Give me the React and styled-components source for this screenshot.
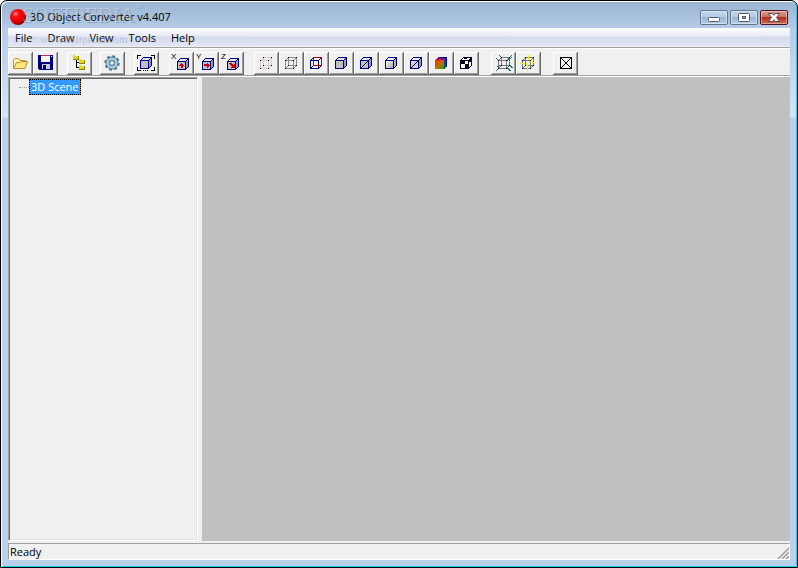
import { useState } from "react";
import styled, { createGlobalStyle } from "styled-components";

const navy = "#000080";
const cubeEdges =
  "M3.5 6.5h8v8h-8zM3.5 6.5l3-3h8v8l-3 3M11.5 6.5l3-3";
const wireEdges =
  "M3.5 6.5h8v8h-8zM6.5 3.5h8v8h-8zM3.5 6.5l3-3M11.5 6.5l3-3M11.5 14.5l3-3M3.5 14.5l3-3";
const cubeDots = [
  [3, 6],
  [11, 6],
  [3, 14],
  [11, 14],
  [6, 3],
  [14, 3],
  [6, 11],
  [14, 11],
];

const Icon = ({ children, smooth }) => (
  <svg
    width="20"
    height="18"
    viewBox="0 0 20 18"
    fill="none"
    shapeRendering={smooth ? "auto" : "crispEdges"}
    aria-hidden="true"
  >
    {children}
  </svg>
);

const Cube = ({ front = "#c0c0c0", top = "#e4e4e4", side = "#9898b8", line = navy }) => (
  <>
    <path d="M3.5 6.5l3-3h8l-3 3z" fill={top} />
    <path d="M11.5 6.5l3-3v8l-3 3z" fill={side} />
    <path d="M3.5 6.5h8v8h-8z" fill={front} />
    <path d={cubeEdges} stroke={line} />
  </>
);

const Dots = () =>
  cubeDots.map(([x, y]) => (
    <rect key={`${x}-${y}`} x={x} y={y} width="1" height="1" fill="#000" />
  ));

const OpenIcon = () => (
  <Icon smooth>
    <path
      d="M2.5 13.5v-8l1-1h4l1 2h6l1 1v2"
      fill="#fff3b0"
      stroke="#c09a28"
    />
    <path
      d="M2.5 14.5l3-6h4l1-1h6l-2.5 7z"
      fill="#ffe680"
      stroke="#b88f20"
      strokeLinejoin="round"
    />
  </Icon>
);

const SaveIcon = () => (
  <Icon>
    <path d="M2 1h15v15H3l-1-1z" fill={navy} />
    <path d="M5 1h9v7H5z" fill="#f4f4fa" />
    <path d="M5 1h9v1H5z" fill="#c03040" />
    <path d="M6 10h8v5H6z" fill="#c9cbd9" />
    <path d="M7 11h3v4H7z" fill="#000040" />
    <path d="M15 2h1v1h-1z" fill="#fff" />
  </Icon>
);

const TreeIcon = () => (
  <Icon>
    <path d="M6.5 6v8M6 8.5h3M6 13.5h3" stroke="#000" />
    <path d="M3 1h2v1h4v4H3zM9 5h2v1h4v4H9zM9 11h2v1h4v4H9z" fill="#8a8400" />
    <path d="M3 1h2v1h3v3H3zM9 5h2v1h3v3H9zM9 11h2v1h3v3H9z" fill="#e0d820" />
  </Icon>
);

const GearIcon = () => (
  <Icon smooth>
    <circle cx="9" cy="9" r="6.6" stroke="#4b7186" strokeWidth="2.2" strokeDasharray="2.7 2.48" />
    <circle cx="9" cy="9" r="4.4" stroke="#527d94" strokeWidth="4" />
    <circle cx="9" cy="9" r="4.4" stroke="#a9cfe1" strokeWidth="2.4" />
    <circle cx="9" cy="9" r="2.2" fill="#f0f0f0" stroke="#688b9c" />
  </Icon>
);

const FitIcon = () => (
  <Icon>
    <path
      d="M0.5 5V1.5H4M14 1.5h3.5V5M17.5 13v3.5H14M4 16.5H0.5V13M6 16.5h1M8 16.5h1M10 16.5h1"
      stroke="#000"
    />
    <Cube />
  </Icon>
);

const arrows = {
  X: "M5 10h1V9h1V8h1v1h1v1h1v1H8.500v2h-2v-2H5z",
  Y: "M5 9h3V8h1v1h1v1h1v1h-1v1H9v1H8v-2H5z",
  Z: "M5 8h3v1h1v1h1V9h1v4H7v-1h1v-1H7v-1H6V9H5z",
};

const AxisIcon = ({ axis }) => (
  <>
    <AxisLabel>{axis}</AxisLabel>
    <Icon>
      <g transform="translate(2 1)">
        <Cube />
        <path d={arrows[axis]} fill="#d00000" />
      </g>
    </Icon>
  </>
);

const PointsIcon = () => (
  <Icon>
    <path d={wireEdges} stroke="#d6cec6" />
    <Dots />
  </Icon>
);

const WireIcon = () => (
  <Icon>
    <path d={wireEdges} stroke="#8c8c8c" />
    <Dots />
  </Icon>
);

const HiddenIcon = () => (
  <Icon>
    <path d={wireEdges} stroke={navy} />
    <path d="M3.5 6.5h8v8h-8z" stroke={navy} />
    <path d="M6.5 3.5h8v8h-8z" stroke="#c00000" />
  </Icon>
);

const SolidIcon = () => (
  <Icon>
    <Cube />
  </Icon>
);

const SolidEdgeIcon = () => (
  <Icon>
    <Cube />
    <path d="M3.5 14.5l8-8" stroke="#000" />
  </Icon>
);

const SmoothIcon = () => (
  <Icon>
    <defs>
      <linearGradient id="smooth" x1="0" y1="0" x2="1" y2="1">
        <stop offset="0" stopColor="#fff" />
        <stop offset="1" stopColor="#a0a0a0" />
      </linearGradient>
    </defs>
    <Cube front="url(#smooth)" top="#f4f4e8" side="#b0b0b8" />
  </Icon>
);

const SmoothEdgeIcon = () => (
  <Icon>
    <Cube front="#d4d4d4" top="#f0f0f0" />
    <path d="M3.5 14.5l8-8" stroke="#000" />
  </Icon>
);

const ColorIcon = () => (
  <Icon>
    <defs>
      <linearGradient id="face" x1="0" y1="0" x2="1" y2="1">
        <stop offset="0" stopColor="#ff2000" />
        <stop offset="0.5" stopColor="#c07000" />
        <stop offset="1" stopColor="#20a000" />
      </linearGradient>
      <linearGradient id="lid">
        <stop offset="0" stopColor="#e00040" />
        <stop offset="1" stopColor="#4020c0" />
      </linearGradient>
      <linearGradient id="flank" x1="0" y1="0" x2="0" y2="1">
        <stop offset="0" stopColor="#2020d0" />
        <stop offset="1" stopColor="#007050" />
      </linearGradient>
    </defs>
    <path d="M3 6l3-3h9l-3 3z" fill="url(#lid)" />
    <path d="M12 6l3-3v9l-3 3z" fill="url(#flank)" />
    <path d="M3 6h9v9H3z" fill="url(#face)" />
    <path d="M6.5 3.5h8v8" stroke={navy} />
  </Icon>
);

const TextureIcon = () => (
  <Icon>
    <Cube front="#fff" top="#fff" side="#fff" />
    <path
      d="M3 6h5v4H3zM8 10h4v5H8zM7 3h3v2H7zM12 5h2v3h-2z"
      fill="#000"
    />
    <path d={cubeEdges} stroke="#000030" />
  </Icon>
);

const ExplodeIcon = () => (
  <Icon>
    <g transform="translate(1 0)">
      <path d={wireEdges} stroke="#777" />
      <path
        d="M1 4l3 3M4 1l3 3M14 4l3-3M12 7l5-4M1 17l3-3M12 14l4 3M14 11l4 3M2 13l4-2"
        stroke="#187878"
      />
      <Dots />
    </g>
  </Icon>
);

const NormalsIcon = () => (
  <Icon>
    <path d={wireEdges} stroke="#777" />
    <Dots />
    <path
      d="M9.5 1v5M8.5 12v5M1 9.5h4M13 8.500h4M7 11.500h2M10 7.500h2M7.500 9v2"
      stroke="#f4ee00"
    />
  </Icon>
);

const BoxIcon = () => (
  <Icon>
    <path d="M4.5 3.5h11v11h-11z" stroke="#000" />
    <path d="M4.5 3.5l11 11M15.5 3.5l-11 11" stroke="#000" />
  </Icon>
);

const toolGroups = [
  {
    gap: 9,
    tools: [
      { label: "Open", icon: <OpenIcon /> },
      { label: "Save", icon: <SaveIcon /> },
    ],
  },
  { gap: 8, tools: [{ label: "Scene tree", icon: <TreeIcon /> }] },
  { gap: 9, tools: [{ label: "Settings", icon: <GearIcon /> }] },
  { gap: 10, tools: [{ label: "Fit", icon: <FitIcon /> }] },
  {
    gap: 10,
    tools: [
      { label: "Rotate X", icon: <AxisIcon axis="X" /> },
      { label: "Rotate Y", icon: <AxisIcon axis="Y" /> },
      { label: "Rotate Z", icon: <AxisIcon axis="Z" /> },
    ],
  },
  {
    gap: 12,
    tools: [
      { label: "Points", icon: <PointsIcon /> },
      { label: "Wireframe", icon: <WireIcon /> },
      { label: "Hidden lines", icon: <HiddenIcon /> },
      { label: "Solid", icon: <SolidIcon /> },
      { label: "Solid with edges", icon: <SolidEdgeIcon /> },
      { label: "Smooth", icon: <SmoothIcon /> },
      { label: "Smooth with edges", icon: <SmoothEdgeIcon /> },
      { label: "Vertex colors", icon: <ColorIcon /> },
      { label: "Texture", icon: <TextureIcon /> },
    ],
  },
  {
    gap: 12,
    tools: [
      { label: "Vertex normals", icon: <ExplodeIcon /> },
      { label: "Face normals", icon: <NormalsIcon /> },
    ],
  },
  { gap: 0, tools: [{ label: "Bounding box", icon: <BoxIcon /> }] },
];

const menus = ["File", "Draw", "View", "Tools", "Help"];

const App = () => {
  const [selected, setSelected] = useState(true);

  return (
    <>
      <GlobalStyle />
      <Window>
        <TitleBar>
          <svg width="18" height="18" viewBox="0 0 18 18" aria-hidden="true">
            <defs>
              <radialGradient id="ball" cx="0.35" cy="0.3" r="0.75">
                <stop offset="0" stopColor="#ff9a9a" />
                <stop offset="0.25" stopColor="#ff1010" />
                <stop offset="0.7" stopColor="#e00000" />
                <stop offset="1" stopColor="#700000" />
              </radialGradient>
            </defs>
            <circle cx="9" cy="9" r="8" fill="url(#ball)" />
          </svg>
          <Title>3D Object Converter v4.407</Title>
          <Caption>
            <CaptionButton aria-label="Minimize">
              <svg width="12" height="11" viewBox="0 0 12 11">
                <rect x="0.5" y="5.5" width="11" height="4" rx="1" fill="#fff" stroke="#555b6b" />
              </svg>
            </CaptionButton>
            <CaptionButton aria-label="Maximize">
              <svg width="12" height="11" viewBox="0 0 12 11">
                <rect x="0.5" y="1.5" width="11" height="8" rx="1" fill="#fff" stroke="#555b6b" />
                <rect x="4.5" y="4.5" width="3" height="2" fill="#8fb0d4" stroke="#555b6b" />
              </svg>
            </CaptionButton>
            <CaptionButton $close aria-label="Close">
              <svg width="12" height="11" viewBox="0 0 12 11">
                <path
                  d="M0.500 1.5h4L6 3.3l1.500-1.800h4L8.500 5.500l3 4h-4L6 7.700 4.500 9.500h-4l3-4z"
                  fill="#fff"
                  stroke="#5b4a55"
                />
              </svg>
            </CaptionButton>
          </Caption>
        </TitleBar>
        <Menu>
          {menus.map((name) => (
            <MenuItem key={name}>{name}</MenuItem>
          ))}
        </Menu>
        <Toolbar>
          {toolGroups.map((group, i) => (
            <ToolGroup key={i} $gap={group.gap}>
              {group.tools.map((tool) => (
                <ToolButton key={tool.label} aria-label={tool.label}>
                  {tool.icon}
                </ToolButton>
              ))}
            </ToolGroup>
          ))}
        </Toolbar>
        <Content>
          <TreePane>
            <Branch />
            <TreeItem $selected={selected} onClick={() => setSelected(true)}>
              3D Scene
            </TreeItem>
          </TreePane>
          <Viewport />
        </Content>
        <StatusBar>
          <span>Ready</span>
          <svg width="12" height="12" viewBox="0 0 12 12" aria-hidden="true">
            <path d="M1 12L12 1M5 12l7-7M9 12l3-3" stroke="#969696" strokeWidth="1.4" />
          </svg>
        </StatusBar>
        <Watermark>
          <Brand>
            SOFTPEDIA<Mark>™</Mark>
          </Brand>
          <Site>www.softpedia.com</Site>
        </Watermark>
      </Window>
    </>
  );
};

const GlobalStyle = createGlobalStyle`
  * {
    box-sizing: border-box;
  }
  body {
    margin: 0;
    color: #000;
    background: #fff;
    font: 11px/16px "Open Sans", "Noto Sans", sans-serif;
  }
  button {
    margin: 0;
    padding: 0;
    border: 0;
    font: inherit;
  }
`;

const Window = styled.div`
  position: relative;
  display: flex;
  flex-direction: column;
  min-height: 100vh;
  padding: 1px 7px 7px;
  border: 1px solid #000;
  border-radius: 7px 7px 0 0;
  background: linear-gradient(#98b3d1, #b4cce8 28px, #d4e4f5 116px, #b9d1ea 117px);
  box-shadow: inset 1px 1px 0 #fff, inset -1px -1px 0 #1ccdec;
`;

const TitleBar = styled.header`
  display: flex;
  align-items: center;
  height: 26px;
  padding: 4px 2px 0 1px;
`;

const Title = styled.h1`
  flex: 1;
  margin: 0 0 0 3px;
  font-size: 11px;
  font-weight: 400;
`;

const Caption = styled.div`
  display: flex;
  gap: 2px;
`;

const CaptionButton = styled.button`
  display: flex;
  align-items: center;
  justify-content: center;
  width: 28px;
  height: 15px;
  border: 1px solid ${(props) => (props.$close ? "#4d1521" : "#5f7590")};
  border-radius: 2px;
  background: ${(props) =>
    props.$close
      ? "linear-gradient(#dc9a8c, #cf6c5a 48%, #b52f1c 50%, #cf6a50)"
      : "linear-gradient(#c3d6ea, #b4cbe4 48%, #98b5d3 50%, #b5cde7)"};
  box-shadow: inset 0 0 0 1px rgba(255, 255, 255, 0.4);
`;

const Menu = styled.nav`
  display: flex;
  gap: 1px;
  height: 19px;
  border-bottom: 1px solid #f0f0f0;
  background: linear-gradient(#fff, #e6eaf5 45%, #d5dbee 50%, #e1e6f6);
`;

const MenuItem = styled.button`
  padding: 2px 7px 0;
  background: none;
`;

const Toolbar = styled.div`
  display: flex;
  height: 29px;
  padding: 4px 0 0;
  border-top: 1px solid #a0a0a0;
  border-bottom: 1px solid #a0a0a0;
  background: #f0f0f0;
  box-shadow: inset 0 1px 0 #fff;
`;

const ToolGroup = styled.div`
  display: flex;
  margin-right: ${(props) => props.$gap}px;
`;

const ToolButton = styled.button`
  position: relative;
  display: flex;
  width: 25px;
  height: 23px;
  padding: 2px 0 0 3px;
  background: #f0f0f0;
  box-shadow: inset -1px -1px 0 #696969, inset 1px 1px 0 #fff,
    inset -2px -2px 0 #a0a0a0;
`;

const AxisLabel = styled.span`
  position: absolute;
  left: 2px;
  top: 1px;
  color: #000;
  font: 8px/8px "Liberation Sans", Arial, sans-serif;
`;

const Content = styled.main`
  display: flex;
  flex: 1;
  gap: 4px;
  padding-bottom: 2px;
  border-top: 1px solid #fff;
  background: #f0f0f0;
`;

const TreePane = styled.div`
  display: flex;
  align-items: flex-start;
  width: 190px;
  padding: 0 0 0 10px;
  border: 1px solid;
  border-color: #a0a0a0 #fff #fff #a0a0a0;
  box-shadow: inset 1px 1px 0 #696969, inset -1px -1px 0 #e3e3e3;
`;

const Branch = styled.div`
  width: 10px;
  margin-top: 9px;
  border-top: 1px dotted #a0a0a0;
`;

const TreeItem = styled.button`
  height: 16px;
  margin-top: 1px;
  padding: 0 1px;
  border: 1px dotted #000;
  color: ${(props) => (props.$selected ? "#fff" : "#000")};
  background: ${(props) =>
    props.$selected
      ? "linear-gradient(#3399ff, #3399ff) padding-box, #cc6600 border-box"
      : "none"};
  line-height: 14px;
`;

const Viewport = styled.section`
  flex: 1;
  background: #c0c0c0;
`;

const StatusBar = styled.footer`
  display: flex;
  align-items: flex-end;
  justify-content: space-between;
  height: 17px;
  padding-left: 1px;
  border: 1px solid;
  border-color: #a0a0a0 #fff #fff #a0a0a0;
  background: #f0f0f0;
  line-height: 14px;
`;

const Watermark = styled.div`
  position: absolute;
  left: 21px;
  top: 3px;
  display: flex;
  flex-direction: column;
  align-items: center;
  color: rgba(255, 255, 255, 0.3);
  text-shadow: 1px 1px 0 rgba(70, 90, 120, 0.3);
  pointer-events: none;
`;

const Brand = styled.span`
  display: flex;
  font: 21px/22px "Liberation Serif", "Times New Roman", serif;
`;

const Mark = styled.span`
  font-size: 8px;
  line-height: 8px;
`;

const Site = styled.span`
  margin-top: 4px;
  font: 11px/16px "Liberation Serif", "Times New Roman", serif;
`;

export default App;
